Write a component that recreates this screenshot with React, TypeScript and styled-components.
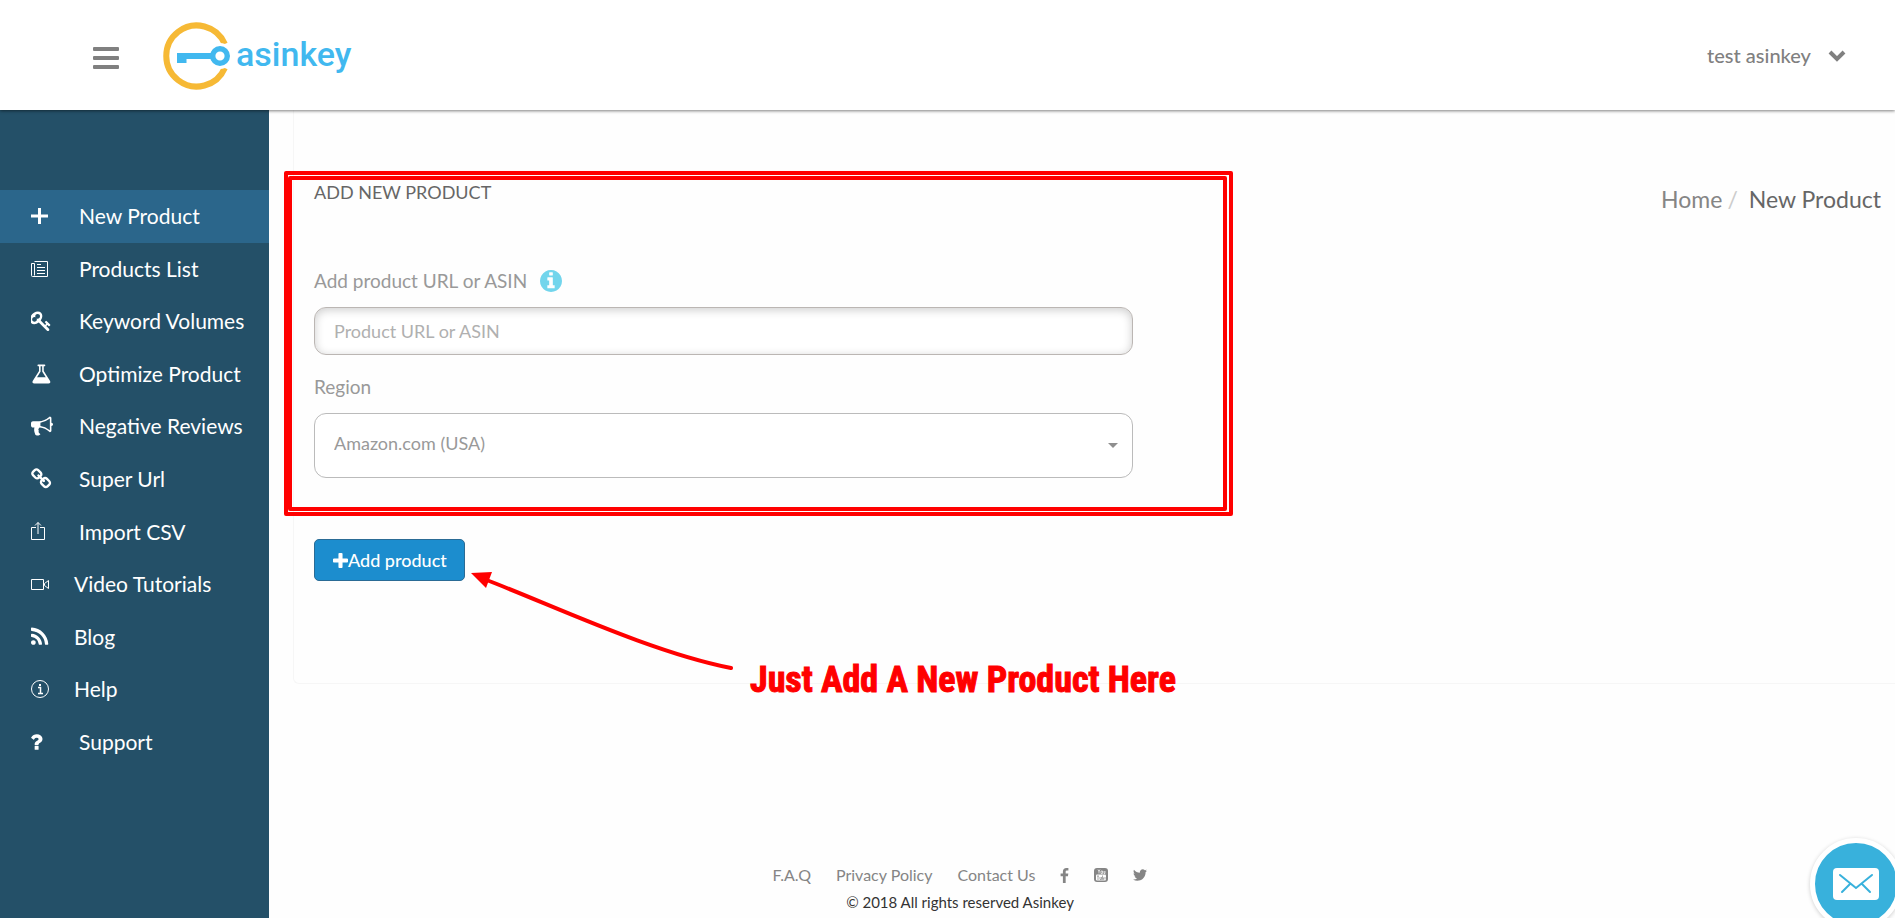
import React from "react";
import styled, { createGlobalStyle } from "styled-components";

const GlobalStyle = createGlobalStyle`
  *, *::before, *::after { box-sizing: border-box; }
  body {
    margin: 0;
    background: #fefefe;
    color: #666;
    font-family: Lato, "Open Sans", sans-serif;
    font-size: 18px;
  }
`;

const Page = styled.div`
  min-height: 100vh;
  display: flex;
  flex-direction: column;
  overflow-x: hidden;
`;

const Header = styled.header`
  position: relative;
  z-index: 2;
  height: 110px;
  flex-shrink: 0;
  display: flex;
  align-items: center;
  padding: 0 48px 0 90px;
  background: #fff;
  box-shadow: 0 1px 3px rgba(0, 0, 0, 0.5);
`;

const MenuButton = styled.button`
  display: flex;
  margin: 6px 37px 0 0;
  padding: 2px;
  border: 0;
  background: none;
  cursor: pointer;
`;

const Brand = styled.a`
  display: flex;
  align-items: center;
  margin-top: 2px;
  color: #41b8ef;
  font: 500 34px/40px Roboto, sans-serif;
  text-decoration: none;
`;

const BrandName = styled.span`
  margin: 0 0 4px 5px;
`;

const UserButton = styled.button`
  display: flex;
  align-items: center;
  gap: 16px;
  margin-left: auto;
  padding: 0;
  border: 0;
  background: none;
  color: #808080;
  font: 500 20px/24px Lato, sans-serif;
  cursor: pointer;
`;

const Body = styled.div`
  flex: 1;
  display: flex;
`;

const Sidebar = styled.nav`
  width: 269px;
  flex-shrink: 0;
  padding-top: 80px;
  background: #245068;
`;

const NavList = styled.ul`
  height: 578px;
  display: grid;
  grid-auto-rows: 1fr;
  margin: 0;
  padding: 0;
  list-style: none;
`;

const NavLink = styled.a<{ $active?: boolean; $tight?: boolean }>`
  height: 100%;
  display: flex;
  align-items: center;
  gap: ${(p) => (p.$tight ? 21 : 26)}px;
  padding-left: 31px;
  background: ${(p) => (p.$active ? "#2b668b" : "transparent")};
  color: #fff;
  font-size: 21px;
  line-height: 28px;
  text-decoration: none;
  white-space: nowrap;
`;

const NavIcon = styled.svg`
  width: 22px;
  height: 22px;
  flex-shrink: 0;
`;

const Main = styled.main`
  flex: 1;
  min-width: 0;
  display: flex;
  flex-direction: column;
`;

const Card = styled.section`
  position: relative;
  height: 574px;
  display: flex;
  justify-content: space-between;
  align-items: flex-start;
  margin-left: 24px;
  padding: 69px 14px 0 20px;
  border: 1px solid #f6f6f6;
  border-width: 0 0 1px 1px;
  border-radius: 0 0 0 6px;
`;

const ProductForm = styled.form`
  width: 819px;
  display: flex;
  flex-direction: column;
  align-items: flex-start;
`;

const Title = styled.h1`
  margin: 0 0 62px;
  color: #666;
  font-size: 18px;
  font-weight: 400;
  line-height: 26px;
`;

const FieldLabel = styled.label`
  display: flex;
  align-items: center;
  gap: 13px;
  height: 28px;
  color: #999;
  font-size: 19px;
  line-height: 28px;
`;

const TextField = styled.input`
  width: 100%;
  height: 48px;
  margin: 12px 0 18px;
  padding: 0 19px;
  border: 1px solid #bbb6b3;
  border-radius: 12px;
  background: #fff;
  box-shadow: inset 0 2px 10px rgba(0, 0, 0, 0.2);
  color: #666;
  font: 400 18px/24px Lato, sans-serif;
  &::placeholder { color: #b0b0b0; opacity: 1; }
`;

const SelectWrap = styled.div`
  position: relative;
  width: 100%;
  margin: 12px 0 61px;
`;

const Select = styled.select`
  appearance: none;
  display: block;
  width: 100%;
  height: 65px;
  padding: 0 40px 6px 19px;
  border: 1px solid #bbb;
  border-radius: 12px;
  background: #fff;
  color: #999;
  font: 400 18px/24px Lato, sans-serif;
`;

const Caret = styled.span`
  position: absolute;
  top: 30px;
  right: 15px;
  border: 5px solid transparent;
  border-top-color: #8f8f8f;
  border-bottom: 0;
  pointer-events: none;
`;

const AddButton = styled.button`
  height: 42px;
  display: flex;
  align-items: center;
  padding: 0 17px 0 18px;
  border: 1px solid #2a6b95;
  border-radius: 5px;
  background: #1c8dce;
  color: #fff;
  font: 500 18px/24px Lato, sans-serif;
  white-space: nowrap;
  cursor: pointer;
`;

const Breadcrumb = styled.nav`
  display: flex;
  margin-top: 6px;
  color: #666;
  font-size: 23px;
  line-height: 28px;
  white-space: nowrap;
`;

const Crumb = styled.a`
  color: #858585;
  text-decoration: none;
`;

const Slash = styled.span`
  margin: 0 11px 0 5px;
  color: #ccc;
`;

const Highlight = styled.div`
  position: absolute;
  top: 61px;
  left: -10px;
  width: 949px;
  height: 345px;
  border: 4px solid #f00;
  border-radius: 2px;
  pointer-events: none;
  &::after {
    content: "";
    position: absolute;
    inset: 1px 2px 1px 0;
    border: 4px solid #f00;
    border-radius: 2px;
  }
`;

const Arrow = styled.svg`
  position: absolute;
  top: 460px;
  left: 176px;
  pointer-events: none;
`;

const Callout = styled.p`
  position: absolute;
  top: 546px;
  left: 456px;
  margin: 0;
  color: #f00;
  font: 700 36px/48px "Roboto Condensed", "Open Sans Condensed", Lato, sans-serif;
  -webkit-text-stroke: 1px #f00;
  stroke-linejoin: round;
  white-space: nowrap;
`;

const Footer = styled.footer`
  display: flex;
  flex-direction: column;
  align-items: center;
  gap: 3px;
  margin-top: auto;
  padding: 0 244px 4px 0;
  color: #333;
  font-size: 15px;
  line-height: 24px;
`;

const FooterLinks = styled.div`
  display: flex;
  align-items: center;
  gap: 25px;
`;

const FooterLink = styled.a`
  display: flex;
  color: #858585;
  font-size: 16px;
  line-height: 24px;
  text-decoration: none;
`;

const MailButton = styled.button`
  position: fixed;
  right: -7px;
  bottom: -12px;
  z-index: 3;
  width: 92px;
  height: 92px;
  display: flex;
  align-items: center;
  justify-content: center;
  padding: 0;
  border: 5px solid #fff;
  border-radius: 50%;
  background: #38b1dc;
  box-shadow: 0 1px 4px rgba(0, 0, 0, 0.2);
  cursor: pointer;
`;

const paths = {
  key: "M832 512q0-80-56-136t-136-56-136 56-56 136q0 42 19 83-41-19-83-19-80 0-136 56t-56 136 56 136 136 56 136-56 56-136q0-42-19-83 41 19 83 19 80 0 136-56t56-136zm851 704q0 17-49 66t-66 49q-9 0-28.5-16t-36.5-33-38.5-40-24.5-26l-96 96 220 220q28 28 28 68 0 42-39 81t-81 39q-40 0-68-28l-671-671q-176 131-365 131-163 0-265.5-102.5t-102.5-265.5q0-160 95-313t248-248 313-95q163 0 265.5 102.5t102.5 265.5q0 189-131 365l355 355 96-96q-3-3-26-24.5t-40-38.5-33-36.5-16-28.5q0-17 49-66t66-49q13 0 23 10 6 6 46 44.5t82 79.5 86.5 86 73 78 28.5 41z",
  flask: "M1591 1448q56 89 21.5 152.5t-140.5 63.5h-1152q-106 0-140.5-63.5t21.5-152.5l503-793v-399h-64q-26 0-45-19t-19-45 19-45 45-19h512q26 0 45 19t19 45-19 45-45 19h-64v399zm-779-725l-272 429h712l-272-429-20-31v-436h-128v436z",
  bullhorn: "M1664 640q53 0 90.5 37.5t37.5 90.5-37.5 90.5-90.5 37.5v384q0 52-38 90t-90 38q-417-347-812-380-58 19-91 66t-31 100.5 40 92.5q-20 33-23 65.5t6 58 33.5 55 48 50 61.5 50.5q-29 58-111.5 83t-168.5 11.5-132-55.5q-7-23-29.5-87.5t-32-94.5-23-89-15-101 3.5-98 22-110.5h-122q-66 0-113-47t-47-113v-192q0-66 47-113t113-47h480q435 0 896-384 52 0 90 38t38 90v384zm-128 604v-954q-394 302-768 343v270q377 42 768 341z",
  chain: "M1520 1216q0-40-28-68l-208-208q-28-28-68-28-42 0-72 32 3 3 19 18.5t21.5 21.5 15 19 13 25.5 3.5 27.5q0 40-28 68t-68 28q-15 0-27.5-3.5t-25.5-13-19-15-21.5-21.5-18.5-19q-33 31-33 73 0 40 28 68l206 207q27 27 68 27 40 0 68-26l147-146q28-28 28-67zm-703-705q0-40-28-68l-206-207q-28-28-68-28-39 0-68 27l-147 146q-28 28-28 67 0 40 28 68l208 208q27 27 68 27 42 0 72-31-3-3-19-18.5t-21.5-21.5-15-19-13-25.5-3.5-27.5q0-40 28-68t68-28q15 0 27.5 3.5t25.5 13 19 15 21.5 21.5 18.5 19q33-31 33-73zm895 705q0 120-85 203l-147 146q-83 83-203 83-121 0-204-85l-206-207q-83-83-83-203 0-123 88-209l-88-88q-86 88-208 88-120 0-204-84l-208-208q-84-84-84-204t85-203l147-146q83-83 203-83 121 0 204 85l206 207q83 83 83 203 0 123-88 209l88 88q86-88 208-88 120 0 204 84l208 208q84 84 84 204z",
  rss: "M576 1344q0 80-56 136t-136 56-136-56-56-136 56-136 136-56 136 56 56 136zm512 123q2 28-17 48-18 21-47 21h-135q-25 0-43-16.5t-20-41.5q-22-229-184.5-391.5t-391.5-184.5q-25-2-41.5-20t-16.5-43v-135q0-29 21-47 17-17 43-17h5q160 13 306 80.5t259 181.5q114 113 181.5 259t80.5 306zm512 2q2 27-18 47-18 20-46 20h-143q-26 0-44.5-17.5t-19.5-42.5q-12-215-101-408.5t-231.5-336-336-231.5-408.5-102q-25-1-42.5-19.5t-17.5-43.5v-143q0-28 20-46 18-18 44-18h3q262 13 501.5 120t425.5 294q187 186 294 425.5t120 501.5z",
  question: "M1088 1256v240q0 16-12 28t-28 12h-240q-16 0-28-12t-12-28v-240q0-16 12-28t28-12h240q16 0 28 12t12 28zm316-600q0 54-15.5 101t-35 76.5-55 59.5-57.5 43.5-61 35.5q-41 23-68.5 65t-27.5 67q0 17-12 32.5t-28 15.5h-240q-15 0-25.5-18.5t-10.5-37.5v-45q0-83 65-156.5t143-108.5q59-27 84-56t25-76q0-42-46.5-74t-107.5-32q-65 0-108 29-35 25-107 115-13 16-31 16-12 0-25-8l-164-125q-13-10-15.5-25t5.5-28q160-266 464-266 80 0 161 31t146 83 106 127.5 41 158.5z",
  info: "M1152 1376v-160q0-14-9-23t-23-9h-96v-512q0-14-9-23t-23-9h-320q-14 0-23 9t-9 23v160q0 14 9 23t23 9h96v320h-96q-14 0-23 9t-9 23v160q0 14 9 23t23 9h448q14 0 23-9t9-23zm-128-896v-160q0-14-9-23t-23-9h-192q-14 0-23 9t-9 23v160q0 14 9 23t23 9h192q14 0 23-9t9-23zm640 416q0 209-103 385.5t-279.5 279.5-385.5 103-385.5-103-279.5-279.5-103-385.5 103-385.5 279.5-279.5 385.5-103 385.5 103 279.5 279.5 103 385.5z",
  facebook: "M1343 12v264h-157q-86 0-116 36t-30 108v189h293l-39 296h-254v759h-306v-759h-255v-296h255v-218q0-186 104-288.5t277-102.5q147 0 228 12z",
  twitter: "M1684 408q-67 98-162 167 1 14 1 42 0 130-38 259.5t-115.5 248.5-184.5 210.5-258 146-323 54.5q-271 0-496-145 35 4 78 4 225 0 401-138-105-2-188-64.5t-114-159.5q33 5 61 5 43 0 85-11-112-23-185.5-111.5t-73.5-205.5v-4q68 38 146 41-66-44-105-115t-39-154q0-88 44-163 121 149 294.5 238.5t371.5 99.5q-8-38-8-74 0-134 94.5-228.5t228.5-94.5q140 0 236 102 109-21 205-78-37 115-142 178 93-10 186-50z",
  plus: "M1600 736v192q0 40-28 68t-68 28h-416v416q0 40-28 68t-68 28h-192q-40 0-68-28t-28-68v-416h-416q-40 0-68-28t-28-68v-192q0-40 28-68t68-28h416v-416q0-40 28-68t68-28h192q40 0 68 28t28 68v416h416q40 0 68 28t28 68z",
};

/* Solid glyphs share a 1792-unit grid; the origin trims their left bearing. */
const SolidIcon = ({ d, x = 0, y = 0 }: { d: string; x?: number; y?: number }) => (
  <NavIcon viewBox={`${x} ${y} 1792 1792`} fill="currentColor" aria-hidden="true">
    <path d={d} />
  </NavIcon>
);

const LineIcon = ({ children }: { children: React.ReactNode }) => (
  <NavIcon viewBox="0 0 22 22" fill="none" stroke="currentColor" aria-hidden="true">
    {children}
  </NavIcon>
);

const navItems = [
  {
    label: "New Product",
    active: true,
    icon: <LineIcon><path d="M0 11h17M8.500 3v16" strokeWidth="3" /></LineIcon>,
  },
  {
    label: "Products List",
    icon: (
      <LineIcon>
        <path d="M3.500 3.500h13v15h-15a1 1 0 0 1-1-1v-12h3v12M6 6.500h4M6 9.500h8M6 12.500h8M6 15.500h8" />
      </LineIcon>
    ),
  },
  { label: "Keyword Volumes", icon: <SolidIcon d={paths.key} x={100} y={0} /> },
  { label: "Optimize Product", icon: <SolidIcon d={paths.flask} x={50} y={0} /> },
  { label: "Negative Reviews", icon: <SolidIcon d={paths.bullhorn} y={0} /> },
  { label: "Super Url", icon: <SolidIcon d={paths.chain} x={70} y={0} /> },
  {
    label: "Import CSV",
    icon: (
      <LineIcon>
        <path d="M5 6.500H.5v12h13v-12H9M7 13V1.500M4 4.500l3-3 3 3" />
      </LineIcon>
    ),
  },
  {
    label: "Video Tutorials",
    tight: true,
    icon: (
      <LineIcon>
        <path d="M.5 6.500h12v10H.5zM13.500 10.500l4-3v8l-4-3z" />
      </LineIcon>
    ),
  },
  { label: "Blog", tight: true, icon: <SolidIcon d={paths.rss} x={192} y={0} /> },
  {
    label: "Help",
    tight: true,
    icon: (
      <LineIcon>
        <circle cx="9" cy="11" r="8.500" />
        <path d="M7 9.500h2.500V15M7 15.500h5" strokeWidth="1.500" />
        <path d="M8 7h2" strokeWidth="2" />
      </LineIcon>
    ),
  },
  { label: "Support", icon: <SolidIcon d={paths.question} x={470} y={0} /> },
];

const BrandMark = () => (
  <svg width="72" height="72" viewBox="0 0 72 72" aria-hidden="true">
    <path d="M65.800 24A30.500 30.500 0 1 0 65.800 48" fill="none" stroke="#f6b935" strokeWidth="6" />
    <circle cx="61" cy="36" r="13" fill="#fff" />
    <circle cx="61" cy="36" r="7.300" fill="none" stroke="#41b8ef" strokeWidth="5.400" />
    <path d="M18 33h36v6H27.500v4H18z" fill="#41b8ef" />
  </svg>
);

export default function App() {
  return (
    <Page>
      <GlobalStyle />
      <Header>
        <MenuButton type="button" aria-label="Toggle menu">
          <svg width="28" height="24" viewBox="0 0 28 24" fill="#808080">
            <rect x="1" y="1" width="26" height="4" rx="1" />
            <rect x="1" y="10" width="26" height="4" rx="1" />
            <rect x="1" y="19" width="26" height="4" rx="1" />
          </svg>
        </MenuButton>
        <Brand href="#">
          <BrandMark />
          <BrandName>asinkey</BrandName>
        </Brand>
        <UserButton type="button">
          test asinkey
          <svg width="20" height="14" viewBox="0 0 20 14" fill="none" aria-hidden="true">
            <path d="M3 4l7 7 7-7" stroke="#808080" strokeWidth="4" />
          </svg>
        </UserButton>
      </Header>
      <Body>
        <Sidebar aria-label="Main">
          <NavList>
            {navItems.map((item) => (
              <li key={item.label}>
                <NavLink href="#" $active={item.active} $tight={item.tight}>
                  {item.icon}
                  {item.label}
                </NavLink>
              </li>
            ))}
          </NavList>
        </Sidebar>
        <Main>
          <Card>
            <ProductForm onSubmit={(e) => e.preventDefault()}>
              <Title>ADD NEW PRODUCT</Title>
              <FieldLabel htmlFor="product">
                Add product URL or ASIN
                <svg width="22" height="22" viewBox="128 128 1536 1536" fill="#72d5ec" aria-hidden="true">
                  <path d={paths.info} />
                </svg>
              </FieldLabel>
              <TextField id="product" type="text" placeholder="Product URL or ASIN" />
              <FieldLabel htmlFor="region">Region</FieldLabel>
              <SelectWrap>
                <Select id="region" defaultValue="us">
                  <option value="us">Amazon.com (USA)</option>
                </Select>
                <Caret />
              </SelectWrap>
              <AddButton type="submit">
                <svg width="15" height="15" viewBox="192 128 1408 1408" fill="#fff" aria-hidden="true">
                  <path d={paths.plus} />
                </svg>
                Add product
              </AddButton>
            </ProductForm>
            <Breadcrumb aria-label="Breadcrumb">
              <Crumb href="#">Home</Crumb>
              <Slash>/</Slash>
              <span>New Product</span>
            </Breadcrumb>
            <Highlight />
            <Arrow width="268" height="104" viewBox="0 0 268 104" aria-hidden="true">
              <path d="M14 9C80 34 180 82 261 98" fill="none" stroke="#f00" strokeWidth="4" strokeLinecap="round" />
              <path d="M1 3l21-1-6 16z" fill="#f00" />
            </Arrow>
            <Callout>Just Add A New Product Here</Callout>
          </Card>
          <Footer>
            <FooterLinks>
              <FooterLink href="#">F.A.Q</FooterLink>
              <FooterLink href="#">Privacy Policy</FooterLink>
              <FooterLink href="#">Contact Us</FooterLink>
              <FooterLink href="#" aria-label="Facebook">
                <svg width="9" height="15" viewBox="479 0 864 1664" fill="currentColor">
                  <path d={paths.facebook} />
                </svg>
              </FooterLink>
              <FooterLink href="#" aria-label="YouTube">
                <svg width="14" height="14" viewBox="0 0 14 14">
                  <rect width="14" height="14" rx="3" fill="#858585" />
                  <rect x="2" y="6.500" width="10" height="6" rx="1" fill="#fff" />
                  <path d="M4 1.500l1 2v2M6 1.500l-1 2M7 3v2.500h1.500V3zM10 3v2.500h1V3" fill="none" stroke="#fff" strokeWidth=".7" />
                  <path d="M3 8h2M4 8v4M6 9v2.500h1.500V9M8.500 7.500v4h1v-2M11 9v2.500" fill="none" stroke="#858585" strokeWidth=".7" />
                </svg>
              </FooterLink>
              <FooterLink href="#" aria-label="Twitter">
                <svg width="14" height="12" viewBox="108 256 1576 1280" fill="currentColor">
                  <path d={paths.twitter} />
                </svg>
              </FooterLink>
            </FooterLinks>
            <span>© 2018 All rights reserved Asinkey</span>
          </Footer>
        </Main>
      </Body>
      <MailButton type="button" aria-label="Send a message">
        <svg width="46" height="32" viewBox="0 0 46 32">
          <rect width="46" height="32" rx="4" fill="#fff" />
          <path d="M7 7l16 13L39 7M9 24l8-8M37 24l-8-8" fill="none" stroke="#38b1dc" strokeWidth="2" strokeLinecap="round" />
        </svg>
      </MailButton>
    </Page>
  );
}
